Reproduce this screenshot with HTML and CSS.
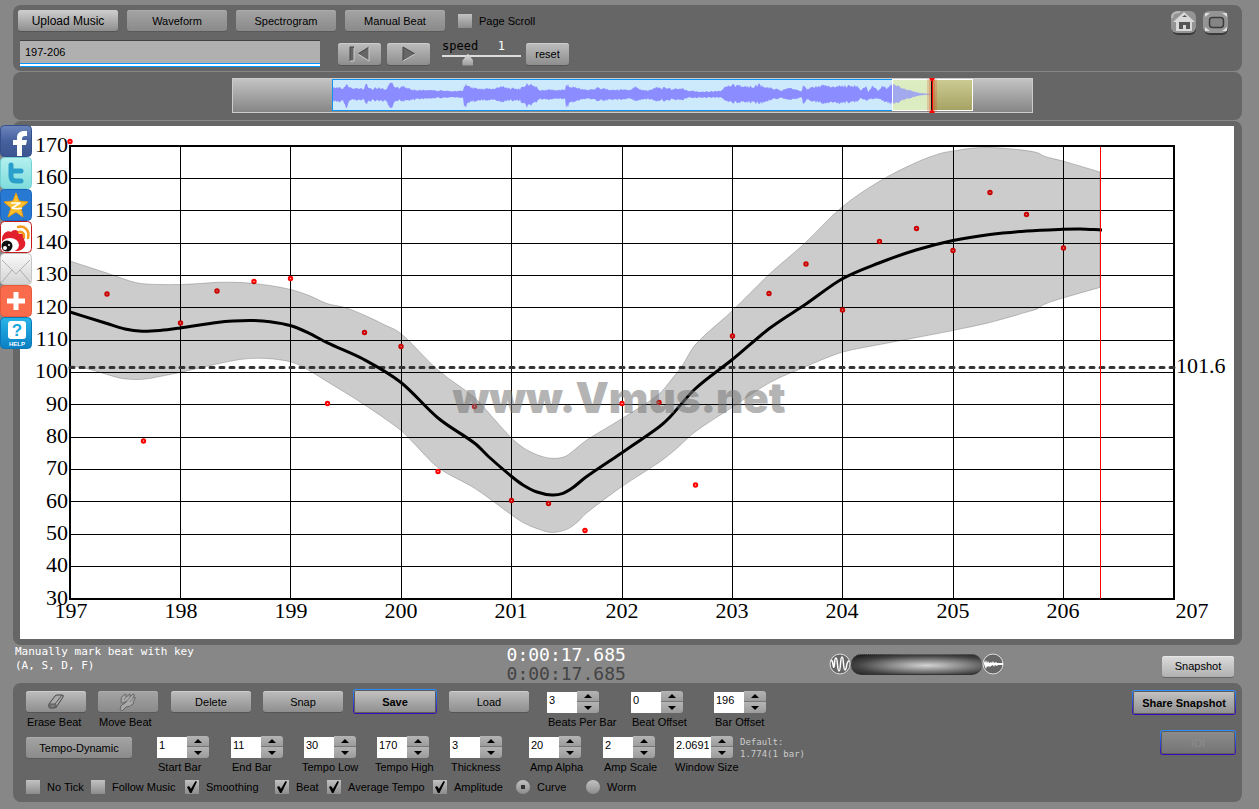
FILE: index.html
```html
<!DOCTYPE html>
<html lang="en">
<head>
    <meta charset="UTF-8">
    <meta name="viewport" content="width=device-width, initial-scale=1.0">
    <title>Vmus.net</title>
    <link rel="stylesheet" href="styles.css">
</head>
<body>
    <nav class="share-bar">
        <a href="#facebook" aria-label="Facebook">
            <svg viewBox="0 0 32 32">
                <defs>
                    <linearGradient id="fb" x2="0" y2="1"><stop offset="0" stop-color="#6d86bd"/><stop offset=".5" stop-color="#45619d"/><stop offset="1" stop-color="#3b5590"/></linearGradient>
                    <linearGradient id="tw" x2="0" y2="1"><stop offset="0" stop-color="#b4f0ee"/><stop offset="1" stop-color="#7fdcdc"/></linearGradient>
                    <linearGradient id="mail" x2="0" y2="1"><stop offset="0" stop-color="#fafafa"/><stop offset="1" stop-color="#d2d2d2"/></linearGradient>
                    <linearGradient id="help" x2="0" y2="1"><stop offset="0" stop-color="#29b5e8"/><stop offset="1" stop-color="#0a7fc4"/></linearGradient>
                </defs>
                <rect x=".5" y=".5" width="31" height="31" rx="4" fill="url(#fb)" stroke="#34508c"/>
                <path d="M17 31V20h-4v-5h4v-2c0-5 3-7 7-7h3v5h-2c-2 0-3 1-3 3v1h5l-1 5h-4v11z" fill="#fff"/>
            </svg>
        </a>
        <a href="#twitter" aria-label="Twitter">
            <svg viewBox="0 0 32 32">
                <rect x=".5" y=".5" width="31" height="31" rx="4" fill="url(#tw)" stroke="#74d2d4"/>
                <path d="M11 8v11q0 5 5 5h5M11 14h10" fill="none" stroke="#2b9fcb" stroke-width="5" stroke-linecap="round"/>
            </svg>
        </a>
        <a href="#qzone" aria-label="Qzone">
            <svg viewBox="0 0 32 32">
                <rect x=".5" y=".5" width="31" height="31" rx="4" fill="#2779d2" stroke="#1b66bc"/>
                <path d="M16 4l3 8 9 1-7 6 2 9-7-5-8 5 3-9-7-6 9-1z" fill="#fbc02d" stroke="#e79a13"/>
                <path d="M11 14h9l-8 5c4 1 7 1 10 0" fill="none" stroke="#fff" stroke-width="1.500" stroke-linejoin="round"/>
            </svg>
        </a>
        <a href="#weibo" aria-label="Weibo">
            <svg viewBox="0 0 32 32">
                <rect x=".5" y=".5" width="31" height="31" rx="4" fill="#fff" stroke="#c51a1a"/>
                <path d="M2 17c1-5 6-8 9-6 2-3 8-3 8 2 5-1 7 2 5 6 3 3 1 10-6 11H4L2 28z" fill="#e2202c"/>
                <ellipse cx="10" cy="24" rx="9" ry="7" fill="#fff"/>
                <circle cx="7" cy="25" r="5.5" fill="#111"/>
                <circle cx="5" cy="27" r="2" fill="#fff"/><circle cx="9" cy="24" r="1" fill="#fff"/>
                <path d="M18 6c7-2 12 4 10 11M19 11c3-1 6 2 5 5" fill="none" stroke="#f39a1e" stroke-width="2.500" stroke-linecap="round"/>
            </svg>
        </a>
        <a href="#mail" aria-label="Mail">
            <svg viewBox="0 0 32 32">
                <rect x=".5" y=".5" width="31" height="31" rx="4" fill="url(#mail)" stroke="#c6c6c6"/>
                <path d="M2 7l14 14L30 7M2 29l10-12M30 29L20 17" fill="none" stroke="#b0b0b0"/>
            </svg>
        </a>
        <a href="#more" aria-label="More">
            <svg viewBox="0 0 32 32">
                <rect x=".5" y=".5" width="31" height="31" rx="4" fill="#fa6b4b" stroke="#e65a3c"/>
                <path d="M16 7v18M7 16h18" stroke="#fff" stroke-width="5"/>
            </svg>
        </a>
        <a href="#help" aria-label="Help">
            <svg viewBox="0 0 32 32">
                <rect x=".5" y=".5" width="31" height="31" rx="4" fill="url(#help)" stroke="#0b78b8"/>
                <rect x="8" y="4" width="18" height="18" rx="3" fill="#fff"/>
                <text x="17" y="19" class="help-mark">?</text>
                <text x="17" y="29" class="help-text">HELP</text>
            </svg>
        </a>
    </nav>

    <main>
        <header class="panel top">
            <div class="tools">
                <div class="row tabs">
                    <button class="btn upload">Upload Music</button>
                    <button class="btn flat">Waveform</button>
                    <button class="btn flat">Spectrogram</button>
                    <button class="btn flat">Manual Beat</button>
                    <label class="check"><input type="checkbox">Page Scroll</label>
                </div>
                <div class="row player">
                    <input class="title" type="text" value="197-206" aria-label="Title">
                    <div class="transport">
                        <button class="btn" aria-label="Back to start">
                            <svg width="22" height="16" viewBox="0 0 22 16"><path d="M1 1h4v14H1zM20 1v14L9 8z" fill="#666"/><path d="M1 15V1h4M20 1L9 8" fill="none" stroke="#444"/><path d="M5 2v13H1M9 8l11 7V1" fill="none" stroke="#ccc"/></svg>
                        </button>
                        <button class="btn" aria-label="Play">
                            <svg width="14" height="16" viewBox="0 0 14 16"><path d="M1 1l12 7-12 7z" fill="#666"/><path d="M1 15V1l12 7" fill="none" stroke="#444"/><path d="M13 8L1 15" fill="none" stroke="#ccc"/></svg>
                        </button>
                    </div>
                    <div class="speed">
                        <div class="speed-text"><label for="speed">speed</label><output for="speed">1</output></div>
                        <input id="speed" type="range" min="0" max="100" value="30">
                    </div>
                    <button class="btn reset">reset</button>
                </div>
            </div>
            <div class="corner">
                <button class="icon-btn" aria-label="Home">
                    <svg viewBox="0 0 26 26">
                        <rect x="1" y="3" width="24" height="22" rx="6" fill="#3a3a3a"/>
                        <rect x="0" y="1" width="25" height="22" rx="6" fill="#949494"/>
                        <path d="M1 8c0-5 3-6 8-6" fill="none" stroke="#bbb" stroke-width="2"/>
                        <path d="M13 2l11 10h-3v9H5v-9H2z" fill="#d8d8d8"/>
                        <path d="M8 19v-7h11v7h-4v-4h-3v4zM11 7h5l-2-2z" fill="#555"/>
                    </svg>
                </button>
                <button class="icon-btn" aria-label="Full screen">
                    <svg viewBox="0 0 26 26">
                        <rect x="1" y="3" width="24" height="22" rx="6" fill="#3a3a3a"/>
                        <rect x="0" y="1" width="25" height="22" rx="6" fill="#949494"/>
                        <rect x="6.500" y="7.500" width="14" height="10" rx="3" fill="#858585" stroke="#3c3c3c" stroke-width="1.500"/>
                        <path d="M2 7V3h5zM19 3h5v4zM2 17v4h5zM24 17v4h-5z" fill="#ddd"/>
                    </svg>
                </button>
            </div>
        </header>

        <section class="panel overview">
            <svg viewBox="232 78 801 35" width="801" height="35">
                <defs>
                    <linearGradient id="bar" x2="0" y2="1"><stop offset="0" stop-color="#c4c4c4"/><stop offset="1" stop-color="#858585"/></linearGradient>
                    <linearGradient id="view" x2="0" y2="1"><stop offset="0" stop-color="#cccb92"/><stop offset="1" stop-color="#a6a263"/></linearGradient>
                </defs>
                <rect x="232.500" y="78.500" width="800" height="34" fill="url(#bar)" stroke="#ccc"/>
                <rect x="332.500" y="79.500" width="600" height="31" fill="#cdeafd" stroke="#1295ee"/>
                <rect x="892.500" y="79.500" width="40" height="31" fill="#dbedc1"/>
                <rect x="932.500" y="79.500" width="40" height="31" fill="url(#view)"/>
                <path id="wave" fill="#8a8cff"/>
                <rect x="893" y="84" width="38" height="20" fill="#dbedc1" opacity=".3"/>
                <rect x="892.500" y="79.500" width="80" height="31" fill="none" stroke="#fff"/>
                <rect x="927" y="79" width="10" height="33" fill="#e03010" opacity=".2"/>
                <rect x="929" y="79" width="6" height="33" fill="#e03010" opacity=".2"/>
                <path d="M931.500 78v35" stroke="#111"/>
                <path d="M932.500 78v35" stroke="#f00"/>
                <path d="M929 78h6l-2 3h-2zM929 113h6l-2-3h-2z" fill="#f00"/>
            </svg>
        </section>

        <section class="panel chart">
            <svg viewBox="20 126 1214 513">
                <path class="grid" d="M70 178.500h1104M70 210.500h1104M70 243.500h1104M70 275.500h1104M70 307.500h1104M70 340.500h1104M70 372.500h1104M70 404.500h1104M70 437.500h1104M70 469.500h1104M70 501.500h1104M70 534.500h1104M70 566.500h1104M180.500 146v453M290.500 146v453M401.500 146v453M511.500 146v453M622.500 146v453M732.500 146v453M842.500 146v453M953.500 146v453M1063.500 146v453"/>
                <rect class="frame" x="70" y="146" width="1104" height="453"/>
                <g id="points"></g>
                <path id="band" class="band"/>
                <path class="average" d="M70 367.500h1106"/>
                <path id="curve" class="curve"/>
                <path class="cursor" d="M1100.500 147v452"/>
                <text class="watermark" x="619" y="413">www.Vmus.net</text>
                <g class="y-axis">
                    <text x="68" y="152">170</text>
                    <text x="68" y="184">160</text>
                    <text x="68" y="217">150</text>
                    <text x="68" y="249">140</text>
                    <text x="68" y="281">130</text>
                    <text x="68" y="314">120</text>
                    <text x="68" y="346">110</text>
                    <text x="68" y="378">100</text>
                    <text x="68" y="411">90</text>
                    <text x="68" y="443">80</text>
                    <text x="68" y="475">70</text>
                    <text x="68" y="508">60</text>
                    <text x="68" y="540">50</text>
                    <text x="68" y="572">40</text>
                    <text x="68" y="605">30</text>
                </g>
                <g class="x-axis">
                    <text x="71" y="618">197</text>
                    <text x="181" y="618">198</text>
                    <text x="291" y="618">199</text>
                    <text x="401" y="618">200</text>
                    <text x="511" y="618">201</text>
                    <text x="622" y="618">202</text>
                    <text x="732" y="618">203</text>
                    <text x="842" y="618">204</text>
                    <text x="953" y="618">205</text>
                    <text x="1063" y="618">206</text>
                    <text x="1192" y="618">207</text>
                </g>
                <text x="1176" y="373">101.6</text>
            </svg>
        </section>

        <section class="status">
            <p class="note">Manually mark beat with key<br>(A, S, D, F)</p>
            <div class="time">
                <div>0:00:17.685</div>
                <div class="total">0:00:17.685</div>
            </div>
            <div class="status-right">
                <div class="mixer">
                    <svg width="22" height="22" viewBox="0 0 22 22"><circle cx="11" cy="11" r="10" fill="#666" stroke="#ddd"/><path d="M2 8c2-3 2 8 3 6s0-9 2-9 1 13 3 13 1-14 3-14 1 13 3 13 1-9 4-9" fill="none" stroke="#fff" stroke-width="1.500"/></svg>
                    <input type="range" aria-label="Mix">
                    <svg width="22" height="22" viewBox="0 0 22 22"><circle cx="11" cy="11" r="10" fill="#666" stroke="#ddd"/><path d="M2 11V7l1 3 1-3 1 3 1-2 1 2 2-1 1 1 1-2 1 2 2-1 1 1 6 0v2h-5l-1 1-2-1-1 2-1-2-2 1-1 1-1-1-1 1-1-1-1 3-1-2z" fill="#fff"/></svg>
                </div>
                <button class="btn snapshot">Snapshot</button>
            </div>
        </section>

        <section class="panel bottom">
            <div class="controls">
                <div class="line line-1">
                    <div class="field">
                        <button class="btn w60" id="erase" aria-labelledby="erase-text">
                            <svg width="18" height="16" viewBox="0 0 18 16"><path d="M2 10l6-8q1-1 2-1h5q2 0 1 2l-6 9q-1 2-3 2H3q-2 0-1-4z" fill="#aaa" stroke="#444"/><path d="M2 10h6q1 0 1 1v3M8 10l7-9M3 11h5v2H3z" fill="none" stroke="#555"/></svg>
                        </button>
                        <span id="erase-text">Erase Beat</span>
                    </div>
                    <div class="field">
                        <button class="btn flat w60" id="move" aria-labelledby="move-text">
                            <svg width="18" height="18" viewBox="0 0 18 18"><path d="M2 8q-1-4 3-6l2-1v3l4-3v3l3-3q2 0 1 2l-1 2q3-2 2 1l-2 3q2 0 0 2-3 3-7 3l-4 4-2-1 1-4q1-2 3-2l3-3-4 2q-2 1-2-2" fill="#aaa" stroke="#666"/><path d="M5 7l3-4M8 8l4-5M11 9l3-4" stroke="#777"/></svg>
                        </button>
                        <span id="move-text">Move Beat</span>
                    </div>
                    <button class="btn w80">Delete</button>
                    <button class="btn w80">Snap</button>
                    <button class="btn glow save">Save</button>
                    <button class="btn w80">Load</button>
                    <div class="field">
                        <div class="stepper"><input id="beats" type="number" value="3"><div class="arrows"><button class="up" aria-label="More"></button><button class="down" aria-label="Less"></button></div></div>
                        <label for="beats">Beats Per Bar</label>
                    </div>
                    <div class="field">
                        <div class="stepper"><input id="beat-offset" type="number" value="0"><div class="arrows"><button class="up" aria-label="More"></button><button class="down" aria-label="Less"></button></div></div>
                        <label for="beat-offset">Beat Offset</label>
                    </div>
                    <div class="field">
                        <div class="stepper"><input id="bar-offset" type="number" value="196"><div class="arrows"><button class="up" aria-label="More"></button><button class="down" aria-label="Less"></button></div></div>
                        <label for="bar-offset">Bar Offset</label>
                    </div>
                </div>

                <div class="line line-2">
                    <button class="btn flat w106">Tempo-Dynamic</button>
                    <div class="field">
                        <div class="stepper"><input id="start-bar" type="number" value="1"><div class="arrows"><button class="up" aria-label="More"></button><button class="down" aria-label="Less"></button></div></div>
                        <label for="start-bar">Start Bar</label>
                    </div>
                    <div class="field">
                        <div class="stepper"><input id="end-bar" type="number" value="11"><div class="arrows"><button class="up" aria-label="More"></button><button class="down" aria-label="Less"></button></div></div>
                        <label for="end-bar">End Bar</label>
                    </div>
                    <div class="field tempo">
                        <div class="stepper"><input id="tempo-low" type="number" value="30"><div class="arrows"><button class="up" aria-label="More"></button><button class="down" aria-label="Less"></button></div></div>
                        <label for="tempo-low">Tempo Low</label>
                    </div>
                    <div class="field tempo">
                        <div class="stepper"><input id="tempo-high" type="number" value="170"><div class="arrows"><button class="up" aria-label="More"></button><button class="down" aria-label="Less"></button></div></div>
                        <label for="tempo-high">Tempo High</label>
                    </div>
                    <div class="field">
                        <div class="stepper"><input id="thickness" type="number" value="3"><div class="arrows"><button class="up" aria-label="More"></button><button class="down" aria-label="Less"></button></div></div>
                        <label for="thickness">Thickness</label>
                    </div>
                    <div class="field">
                        <div class="stepper"><input id="amp-alpha" type="number" value="20"><div class="arrows"><button class="up" aria-label="More"></button><button class="down" aria-label="Less"></button></div></div>
                        <label for="amp-alpha">Amp Alpha</label>
                    </div>
                    <div class="field">
                        <div class="stepper"><input id="amp-scale" type="number" value="2"><div class="arrows"><button class="up" aria-label="More"></button><button class="down" aria-label="Less"></button></div></div>
                        <label for="amp-scale">Amp Scale</label>
                    </div>
                    <div class="field">
                        <div class="stepper wide"><input id="window-size" type="number" step="any" value="2.0691"><div class="arrows"><button class="up" aria-label="More"></button><button class="down" aria-label="Less"></button></div></div>
                        <label for="window-size">Window Size</label>
                    </div>
                    <p class="default">Default:<br>1.774(1 bar)</p>
                </div>

                <div class="line line-3">
                    <label class="check"><input type="checkbox">No Tick</label>
                    <label class="check"><input type="checkbox">Follow Music</label>
                    <label class="check"><input type="checkbox" checked>Smoothing</label>
                    <label class="check"><input type="checkbox" checked>Beat</label>
                    <label class="check"><input type="checkbox" checked>Average Tempo</label>
                    <label class="check"><input type="checkbox" checked>Amplitude</label>
                    <label class="check"><input type="radio" name="mode" checked>Curve</label>
                    <label class="check"><input type="radio" name="mode">Worm</label>
                </div>
            </div>
            <div class="share">
                <button class="btn glow share-snapshot">Share Snapshot</button>
                <button class="btn glow ioi" disabled>IOI</button>
            </div>
        </section>
    </main>

    <script>
        // beat positions: x, y
        const beats = [
            [70, 141.5], [107, 294], [143.5, 441], [180.5, 323], [217, 291], [254, 281.5],
            [290.5, 278.5], [327.5, 403.5], [364.5, 332.5], [401, 346.5], [438, 471.5], [474.5, 406.5],
            [511.5, 500.5], [548.5, 503.5], [585, 530.5], [622, 403.5], [659, 402.5], [695.5, 485],
            [732.5, 336], [769, 293.5], [806, 264], [842.5, 310], [879.5, 241.5], [916.5, 228.5],
            [953, 250.5], [990, 192.5], [1026.5, 214.5], [1063.5, 248]
        ];
        const tempo = [
            [70, 312], [107, 323.5], [125, 329], [142, 331.3], [160, 330.5], [180, 328], [217, 322.5],
            [233, 321], [252, 320.5], [270, 321.7], [291, 325.7], [308, 332.7], [327, 342.7], [364, 359.5],
            [401, 382.5], [438, 418], [475, 443.5], [489, 457], [511, 476], [523, 485], [537, 492],
            [552, 495], [563, 493.3], [573, 487.5], [586, 477], [622, 452.7], [659, 427], [670, 417],
            [695, 389], [733, 359], [770, 328], [806, 304], [842, 279], [879, 263], [916, 250],
            [953, 240.5], [990, 234.5], [1027, 231], [1063, 229.3], [1080, 229], [1102, 230]
        ];
        const upper = [
            [70, 261], [107, 273], [130, 281], [141, 283.5], [160, 284.5], [180, 284.5], [200, 283.5],
            [217, 282.3], [235, 282.3], [252, 283.3], [270, 285.5], [291, 289.5], [308, 295], [327, 303.5],
            [345, 307.5], [364, 315], [385, 325], [401, 333.5], [438, 370], [475, 398], [495, 420],
            [511, 437.5], [523, 447.5], [537, 454.7], [552, 458.3], [565, 456.5], [573, 451], [586, 440.5],
            [622, 418.5], [659, 394], [673, 377.5], [682, 366], [695, 345], [732, 311], [770, 273.5],
            [789, 257], [806, 242], [842, 207], [879, 181.5], [916, 162.5], [940, 153.5], [953, 151],
            [973, 148], [990, 147.5], [1013, 149], [1037, 152.5], [1045, 156.5], [1063, 161], [1100, 172]
        ];
        const lower = [
            [1100, 287.5], [1063, 298], [1044, 304.5], [1037, 309], [1027, 312], [990, 322.5], [953, 330.5],
            [917, 337.5], [880, 344.5], [843, 352], [820, 360.5], [806, 366.5], [770, 382.5], [732, 407.5],
            [695, 432], [675, 450], [659, 462.5], [622, 486.5], [586, 513.5], [577, 522.5], [567, 529.3],
            [552, 532.5], [537, 528.7], [523, 522.5], [511, 514.5], [475, 488.5], [438, 467.5], [413, 442.5],
            [401, 430.5], [364, 404.5], [327, 381.5], [303, 367], [291, 362], [273, 359], [257, 358.3],
            [240, 359.5], [217, 364], [180, 372.5], [160, 376.5], [143, 379.3], [123, 378.7], [107, 374.5],
            [88, 369], [70, 365.5]
        ];

        // curve through all points, without the opening M
        function smooth(p) {
            let d = p[0].join(' ');
            for (let i = 0; i < p.length - 1; i++) {
                const before = p[i - 1] || p[i];
                const after = p[i + 2] || p[i + 1];
                const [x1, y1] = p[i];
                const [x2, y2] = p[i + 1];
                const third = (x2 - x1) / 3;
                const slope1 = (y2 - before[1]) / (x2 - before[0]);
                const slope2 = (after[1] - y1) / (after[0] - x1);
                d += `C${x1 + third} ${y1 + slope1 * third} ${x2 - third} ${y2 - slope2 * third} ${x2} ${y2}`;
            }
            return d;
        }

        document.querySelector('#curve').setAttribute('d', 'M' + smooth(tempo));
        document.querySelector('#band').setAttribute('d', 'M' + smooth(upper) + 'L' + smooth(lower) + 'z');

        const points = document.querySelector('#points');
        beats.forEach(([x, y]) => {
            const dot = document.createElementNS('http://www.w3.org/2000/svg', 'circle');
            dot.setAttribute('cx', x);
            dot.setAttribute('cy', y);
            dot.setAttribute('r', 1.7);
            points.appendChild(dot);
        });

        // loudness: x, height above the middle, height below it
        const level = [
            [333, 6, 6], [343, 6, 7], [346, 9, 13], [350, 7, 6], [356, 5, 5], [364, 5, 5], [366, 10, 9],
            [370, 5, 6], [378, 6, 6], [386, 5, 7], [391, 11, 13], [396, 6, 6], [404, 7, 6], [412, 4, 5],
            [430, 4, 4], [445, 3, 3], [463, 3, 3], [464, 9, 14], [468, 8, 8], [476, 5, 6], [492, 5, 5],
            [500, 8, 8], [508, 6, 6], [520, 5, 6], [527, 10, 12], [534, 8, 8], [540, 4, 5], [565, 4, 4],
            [566, 10, 14], [570, 7, 8], [578, 6, 6], [588, 4, 4], [598, 6, 6], [612, 4, 5], [630, 4, 4],
            [635, 7, 6], [640, 5, 6], [648, 3, 4], [656, 7, 7], [662, 5, 5], [667, 7, 7], [672, 4, 4],
            [679, 6, 6], [690, 3, 3], [700, 2, 3], [720, 3, 3], [724, 6, 5], [733, 9, 8], [744, 7, 7],
            [753, 7, 8], [759, 10, 9], [764, 7, 8], [772, 6, 5], [782, 3, 3], [788, 7, 6], [796, 4, 4],
            [802, 3, 3], [803, 9, 10], [807, 5, 5], [816, 7, 7], [822, 8, 8], [836, 8, 9], [856, 8, 7],
            [861, 4, 4], [866, 8, 6], [868, 2, 5], [872, 7, 4], [876, 7, 5], [878, 3, 4], [882, 8, 6],
            [887, 5, 7], [892, 11, 10], [897, 8, 8], [905, 5, 5], [912, 3, 3], [920, 1, 1], [931, 0, 0]
        ];
        let above = '';
        let below = '';
        let seed = 7;
        let n = 0;
        for (let x = 333; x <= 931; x++) {
            while (level[n + 1][0] < x) n++;
            const a = level[n];
            const b = level[n + 1];
            const t = (x - a[0]) / (b[0] - a[0]);
            seed = (seed * 73 + 41) % 1009;
            const noise = 0.8 + seed / 1009 * 0.4;
            above += `L${x} ${94 - (a[1] + (b[1] - a[1]) * t) * noise}`;
            below = `L${x} ${94.5 + (a[2] + (b[2] - a[2]) * t) * noise}` + below;
        }
        document.querySelector('#wave').setAttribute('d', 'M333 94' + above + below + 'z');
    </script>
</body>
</html>
```

FILE: styles.css
```css
* {
    box-sizing: border-box;
}

body {
    margin: 0;
    padding: 5px 17px 7px 13px;
    position: relative;
    background: #878787;
    color: #000;
    font-family: "Liberation Sans", Arial, sans-serif;
    font-size: 11px;
}

p {
    margin: 0;
}

button,
input {
    font: inherit;
    color: inherit;
    margin: 0;
}

svg {
    display: block;
}

.share-bar {
    position: absolute;
    left: 0;
    top: 125px;
    width: 32px;
}

.share-bar a {
    display: block;
    height: 32px;
}

.help-mark {
    font: bold 17px "Liberation Sans", Arial, sans-serif;
    fill: #16a6dd;
    text-anchor: middle;
}

.help-text {
    font: bold 6px "Liberation Sans", Arial, sans-serif;
    fill: #fff;
    text-anchor: middle;
}

.panel {
    background: #666;
    border-radius: 8px;
    margin-bottom: 1px;
}

/* buttons */

.btn {
    height: 21px;
    padding: 0;
    border: 0;
    border-radius: 3px;
    background: linear-gradient(#bdbdbd, #8e8e8e);
    box-shadow: inset 0 1px #ccc, 0 1px #555;
    display: flex;
    align-items: center;
    justify-content: center;
}

.btn.flat {
    background: linear-gradient(#a4a4a4, #8a8a8a);
    box-shadow: inset 0 1px #adadad, 0 1px #5a5a5a;
}

.btn.glow {
    height: 25px;
    border: 1px solid transparent;
    border-radius: 3px;
    background: linear-gradient(#c4c4c4, #8e8e8e) padding-box, linear-gradient(#2a90ff, #3a08b8) border-box;
    box-shadow: inset 0 0 0 1px #5c5c5c;
    font-weight: bold;
}

.w60 {
    width: 60px;
}

.w80 {
    width: 80px;
}

.w106 {
    width: 106px;
}

/* check boxes */

.check {
    display: flex;
    align-items: center;
    gap: 7px;
    line-height: 14px;
    white-space: nowrap;
}

.check input {
    appearance: none;
    width: 14px;
    height: 14px;
    background: linear-gradient(#c2c2c2, #8c8c8c);
    display: flex;
    align-items: center;
    justify-content: center;
}

.check input[type="radio"] {
    border-radius: 50%;
}

.check input[type="checkbox"]:checked::before {
    content: "";
    width: 10px;
    height: 12px;
    background: #000;
    clip-path: polygon(0 50%, 20% 42%, 40% 65%, 85% 0, 100% 6%, 45% 100%, 30% 100%);
}

.check input[type="radio"]:checked::before {
    content: "";
    width: 4px;
    height: 4px;
    background: #333;
}

/* top */

.top {
    display: flex;
    justify-content: space-between;
    padding: 5px 13px 4px 5px;
}

.row {
    display: flex;
    align-items: center;
}

.tabs {
    gap: 9px;
    margin-bottom: 9px;
}

.tabs .btn {
    width: 100px;
}

.tabs .upload {
    font-size: 12px;
    background: linear-gradient(#cfcfcf, #8e8e8e);
}

.tabs .check {
    margin-left: 4px;
}

.player {
    padding-left: 2px;
}

.title {
    width: 300px;
    height: 27px;
    padding: 0 5px 5px;
    border: 0;
    border-top: 1px solid #444;
    background: #b0b0b0;
    box-shadow: inset 0 -1px #0096ff, inset 0 -3px #fff, inset 0 -4px #0096ff;
}

.transport {
    display: flex;
    gap: 6px;
    margin: 0 12px 0 18px;
}

.transport .btn,
.reset {
    width: 43px;
    height: 22px;
}

.speed {
    width: 79px;
    margin-right: 5px;
}

.speed-text {
    display: flex;
    justify-content: space-between;
    padding-right: 16px;
    font-family: "DejaVu Sans Mono", monospace;
    font-size: 12px;
    line-height: 10px;
}

.speed-text output {
    color: #fff;
}

#speed {
    appearance: none;
    display: block;
    width: 100%;
    height: 16px;
    background: linear-gradient(#ddd, #ddd) 0 4px / 100% 2px no-repeat;
}

#speed::-webkit-slider-thumb {
    appearance: none;
    width: 11px;
    height: 12px;
    margin-top: 2px;
    background: linear-gradient(#ddd, #999);
    clip-path: polygon(50% 0, 100% 60%, 100% 100%, 0 100%, 0 60%);
}

.corner {
    display: flex;
    gap: 6px;
}

.icon-btn {
    width: 26px;
    height: 26px;
    padding: 0;
    border: 0;
    background: none;
}

.overview {
    display: flex;
    justify-content: center;
    padding: 6px 0 7px 10px;
}

/* chart */

.chart {
    padding: 5px 8px 6px 7px;
    margin-bottom: 0;
}

.chart svg {
    width: 100%;
    background: #fff;
    font-family: "Liberation Serif", "Times New Roman", serif;
    font-size: 22px;
}

.grid {
    stroke: #000;
}

.frame {
    fill: none;
    stroke: #000;
    stroke-width: 2;
}

.band {
    fill: rgba(0, 0, 0, 0.2);
    stroke: rgba(0, 0, 0, 0.2);
}

.curve {
    fill: none;
    stroke: #000;
    stroke-width: 3;
    stroke-linejoin: round;
}

.average {
    stroke: #333;
    stroke-width: 3;
    stroke-linecap: round;
    stroke-dasharray: 4 6;
}

.cursor {
    stroke: #f00;
}

#points circle {
    fill: #fbb;
    stroke: #f00;
    stroke-width: 2;
}

.watermark {
    font-family: Inter, "Liberation Sans", sans-serif;
    font-size: 42px;
    font-weight: 900;
    text-anchor: middle;
    fill: #777;
    opacity: 0.55;
}

.y-axis {
    text-anchor: end;
}

.x-axis {
    text-anchor: middle;
}

/* status line */

.status {
    display: grid;
    grid-template-columns: 40% 1fr 413px;
    height: 38px;
    font-family: "DejaVu Sans Mono", monospace;
}

.note {
    padding-left: 2px;
    color: #fff;
    line-height: 14px;
}

.time {
    padding-left: 2px;
    color: #fff;
    font-size: 18px;
    line-height: 19px;
}

.total {
    color: #444;
}

.status-right {
    display: flex;
    align-items: center;
    justify-content: space-between;
    padding-right: 8px;
    font-family: "Liberation Sans", Arial, sans-serif;
}

.mixer {
    display: flex;
    align-items: center;
}

.mixer input {
    appearance: none;
    width: 131px;
    height: 21px;
    border-radius: 10px;
    border-top: 1px dotted #555;
    border-bottom: 1px solid #333;
    background: radial-gradient(ellipse at 58% 55%, #d5d5d5, #888 35%, #444 65%, #222 90%);
}

.mixer input::-webkit-slider-thumb {
    appearance: none;
    width: 1px;
}

.snapshot {
    width: 72px;
    margin-top: 4px;
    background: linear-gradient(#dcdcdc, #b0b0b0);
    box-shadow: inset 0 1px #e6e6e6, 0 1px #666;
}

/* bottom */

.bottom {
    display: flex;
    justify-content: space-between;
    padding: 7px 6px 8px 13px;
    margin-bottom: 0;
}

.line {
    display: grid;
    align-items: start;
}

.line-1 {
    grid-template-columns: 72px 73px 92px 92px 94px 98px 84px 83px auto;
    padding-top: 1px;
    margin-bottom: 7px;
}

.line-2 {
    grid-template-columns: 131px 74px 73px 73px 73px 79px 74px 71px 66px auto;
    margin-bottom: 6px;
}

.line-3 {
    grid-template-columns: 65px 94px 90px 52px 106px 83px 70px auto;
}

.field {
    line-height: 14px;
    white-space: nowrap;
}

.field span,
.field label {
    display: block;
    padding-left: 1px;
}

.tempo label {
    margin-left: -3px;
}

.field .btn {
    margin-bottom: 3px;
}

.save {
    width: 84px;
    margin: -2px 0 0 -2px;
}

.stepper {
    display: flex;
    align-items: end;
    height: 22px;
    margin-bottom: 2px;
}

.stepper input {
    appearance: textfield;
    width: 30px;
    height: 21px;
    padding: 0 2px 5px;
    border: 0;
    background: #fff;
}

.stepper input::-webkit-inner-spin-button {
    appearance: none;
    margin: 0;
}

.stepper.wide input {
    width: 37px;
}

.arrows {
    width: 22px;
}

.arrows button {
    display: flex;
    align-items: center;
    justify-content: center;
    width: 100%;
    height: 11px;
    padding: 0;
    border: 0;
    background: linear-gradient(#b4b4b4, #9c9c9c);
}

.arrows .up {
    border-radius: 0 3px 0 0;
    border-bottom: 1px solid #777;
}

.arrows .down {
    border-radius: 0 0 3px 0;
}

.arrows button::before {
    content: "";
    border: 4px solid transparent;
    border-top-width: 0;
    border-bottom-color: #000;
}

.arrows .down::before {
    border-width: 4px 4px 0;
    border-top-color: #000;
}

.line-2 .btn {
    margin-top: 1px;
}

.default {
    color: #ccc;
    font-family: "DejaVu Sans Mono", monospace;
    font-size: 9px;
    line-height: 12px;
}

.share {
    display: flex;
    flex-direction: column;
    align-items: end;
    gap: 15px;
}

.share-snapshot {
    width: 104px;
}

.btn.ioi {
    width: 76px;
    background: linear-gradient(#8c8c8c, #747474) padding-box, linear-gradient(#2a90ff, #3a08b8) border-box;
    color: #8c8c8c;
    font-weight: normal;
}
```
